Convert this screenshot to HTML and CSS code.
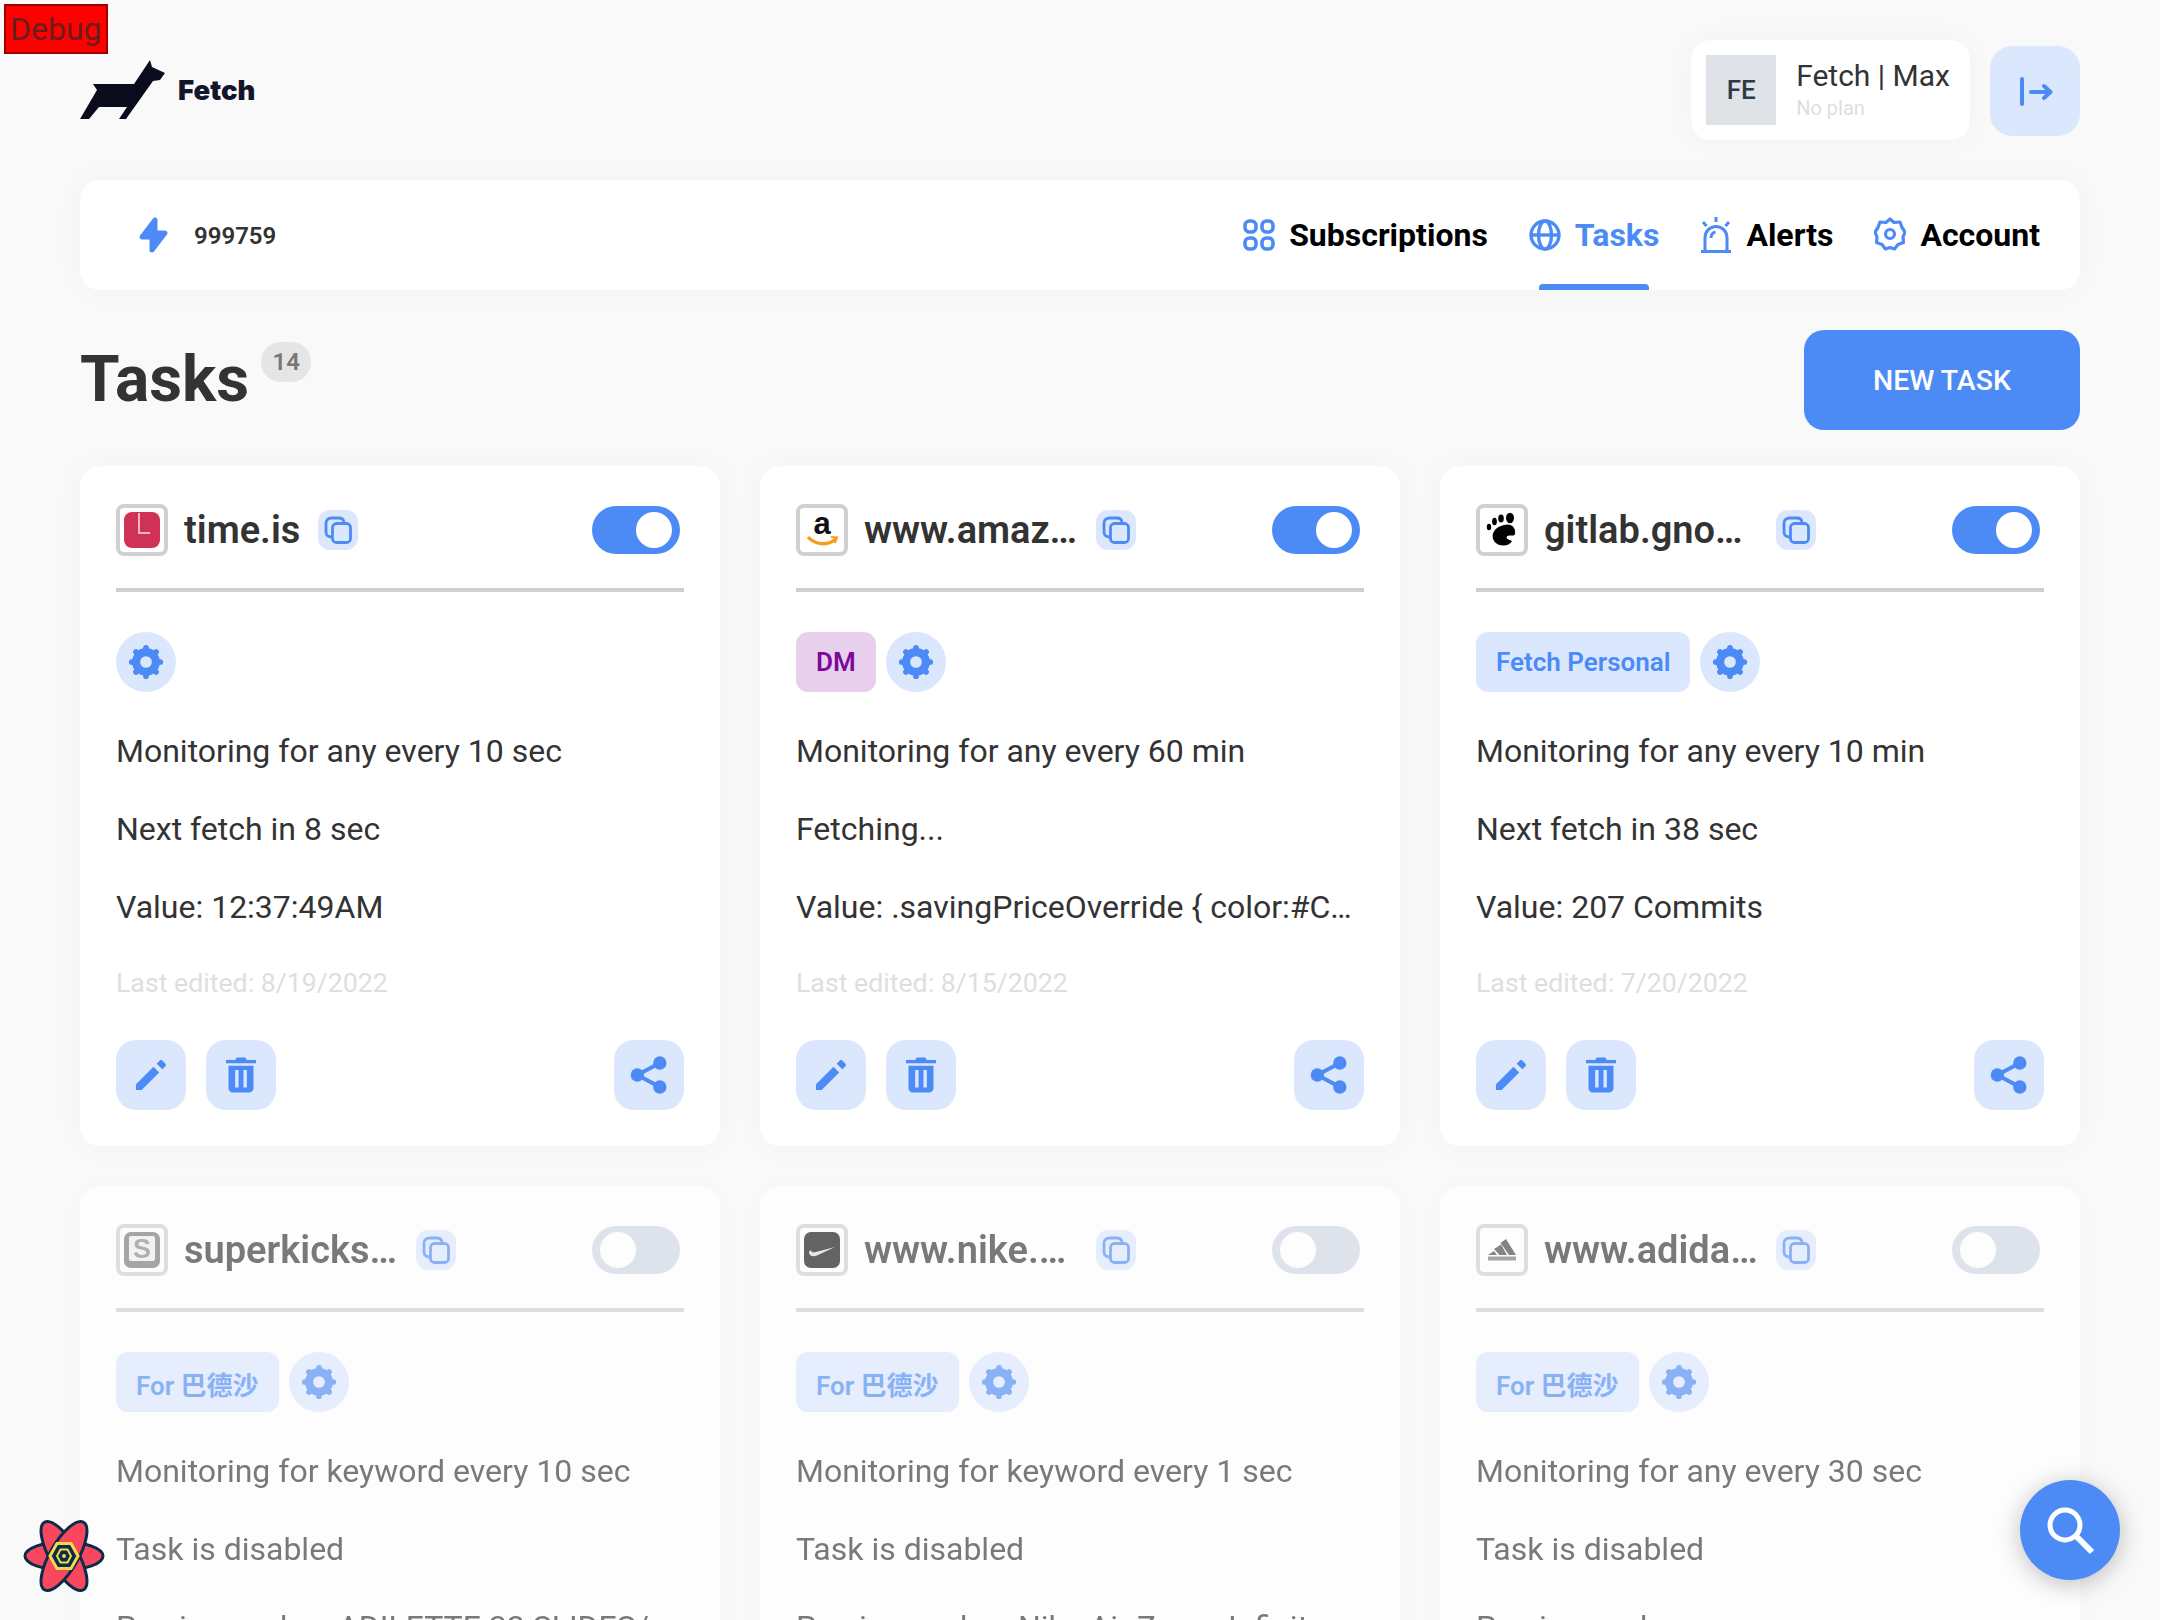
FILE: index.html
```html
<!DOCTYPE html>
<html lang="en">
<head>
    <meta charset="UTF-8">
    <title>Fetch | Tasks</title>
    <link rel="stylesheet" href="styles.css">
</head>
<body>
    <!-- shared icons -->
    <svg class="sprite" xmlns="http://www.w3.org/2000/svg">
        <symbol id="i-copy" viewBox="0 0 28 28">
            <path d="M7.500 21C4.500 21 2 19 2 16V7C2 4 4.500 2 7.500 2H15C17.500 2 19.500 3.500 20 6" fill="none" stroke="currentColor" stroke-width="2.800"/>
            <rect x="8.500" y="7.500" width="18" height="19" rx="4" fill="none" stroke="currentColor" stroke-width="2.800"/>
        </symbol>
        <symbol id="i-gear" viewBox="0 0 24 24">
            <circle cx="12" cy="12" r="6.600" fill="none" stroke="currentColor" stroke-width="5.400"/>
            <g stroke="currentColor" stroke-width="3.800" stroke-linecap="round">
                <path d="M12 2.500V5M12 19V21.500M2.500 12H5M19 12H21.500M5.300 5.300L7 7M17 17L18.700 18.700M5.300 18.700L7 17M17 7L18.700 5.300"/>
            </g>
        </symbol>
        <symbol id="i-edit" viewBox="0 0 24 24">
            <path fill="currentColor" d="M3 17.600V21h3.400L16.900 10.500l-3.400-3.400L3 17.600zM20.700 6.700c.4-.4.4-1 0-1.400l-2-2c-.4-.4-1-.4-1.400 0l-1.900 1.900 3.400 3.400 1.900-1.900z"/>
        </symbol>
        <symbol id="i-trash" viewBox="0 0 24 24">
            <path fill="currentColor" fill-rule="evenodd" d="M9.500 1.500h5L15.500 3H21v2H3V3h5.500l1-1.500zM4.500 6.500h15V20a2.500 2.500 0 0 1-2.500 2.500H7A2.500 2.500 0 0 1 4.500 20V6.500zM8.500 9v10.500h2V9h-2zm5 0v10.500h2V9h-2z"/>
        </symbol>
        <symbol id="i-share" viewBox="0 0 24 24">
            <circle cx="18.500" cy="4.800" r="4" fill="currentColor"/>
            <circle cx="5" cy="12" r="4" fill="currentColor"/>
            <circle cx="18.500" cy="19.200" r="4" fill="currentColor"/>
            <path d="M18.500 4.800L5 12L18.500 19.200" fill="none" stroke="currentColor" stroke-width="2.400"/>
        </symbol>
    </svg>

    <div class="debug">Debug</div>

    <div class="page">
        <header class="top">
            <div class="logo">
                <svg class="logo-dog" viewBox="80 60 85 60">
                    <path fill="#0b0b1e" d="M150 60L152 67L165 73L160 80L153 81L126 119H119L127 107H99L89 119H80L97 90L93 84H134Z"/>
                </svg>
                <span class="logo-text">Fetch</span>
            </div>
            <div class="top-right">
                <div class="user-card">
                    <div class="avatar">FE</div>
                    <div class="user-info">
                        <div class="user-name">Fetch | Max</div>
                        <div class="user-plan">No plan</div>
                    </div>
                </div>
                <button class="logout">
                    <svg width="36" height="36" viewBox="0 0 36 36" fill="none" stroke="currentColor" stroke-width="4" stroke-linecap="round" stroke-linejoin="round">
                        <path d="M5 6V31M14 19H33M27 13L33.500 19L27 25"/>
                    </svg>
                </button>
            </div>
        </header>

        <nav class="nav">
            <div class="credits">
                <svg width="32" height="38" viewBox="0 0 32 38">
                    <path fill="#4c8bf5" stroke="#4c8bf5" stroke-width="5" stroke-linejoin="round" d="M17 4L4 21H14V34L27 17H17Z"/>
                </svg>
                <span class="credits-num">999759</span>
            </div>
            <ul class="nav-items">
                <li class="nav-item">
                    <svg width="32" height="32" viewBox="0 0 32 32" fill="none" stroke="#4c8bf5" stroke-width="3.600">
                        <rect x="2" y="2" width="11" height="11" rx="4.500"/><rect x="19" y="2" width="11" height="11" rx="4.500"/>
                        <rect x="2" y="19" width="11" height="11" rx="4.500"/><rect x="19" y="19" width="11" height="11" rx="4.500"/>
                    </svg>
                    Subscriptions
                </li>
                <li class="nav-item active">
                    <svg width="32" height="32" viewBox="0 0 32 32" fill="none" stroke="#4c8bf5" stroke-width="3.400">
                        <circle cx="16" cy="16" r="14"/><ellipse cx="16" cy="16" rx="6.500" ry="14"/><path d="M2 16H30"/>
                    </svg>
                    Tasks
                </li>
                <li class="nav-item">
                    <svg width="32" height="36" viewBox="0 0 32 36" fill="none" stroke="#4c8bf5" stroke-width="3">
                        <path d="M1 34.500H31M5 34V21C5 14 10 9.500 16 9.500S27 14 27 21V34M11 21C11 17.500 13 15.500 15.500 15"/>
                        <path d="M16 0V5M3 5L6.500 9M29 5L25.500 9"/>
                    </svg>
                    Alerts
                </li>
                <li class="nav-item">
                    <svg width="32" height="36" viewBox="0 0 32 36" fill="none" stroke="#4c8bf5" stroke-width="3.200" stroke-linejoin="round">
                        <path d="M16 2L20 5.500L26 5L28 10.500L31 15L29 20L29.500 25.500L24 27.500L20.500 32L16 30.500L11.500 32L8 27.500L2.500 25.500L3 20L1 15L4 10.500L6 5L12 5.500Z"/>
                        <circle cx="16" cy="17" r="4.500"/>
                    </svg>
                    Account
                </li>
            </ul>
        </nav>

        <div class="title-row">
            <div class="title">
                <h1>Tasks</h1>
                <span class="count">14</span>
            </div>
            <button class="new-task">NEW TASK</button>
        </div>

        <div class="cards">
            <div class="card">
                <div class="card-head">
                    <div class="favicon">
                        <svg viewBox="0 0 36 36">
                            <rect width="36" height="36" rx="8" fill="#cf3157"/>
                            <path d="M15 1V21H26" fill="none" stroke="#f5b5c4" stroke-width="2"/>
                        </svg>
                    </div>
                    <span class="site">time.is</span>
                    <button class="copy"><svg><use href="#i-copy"/></svg></button>
                    <div class="toggle on"></div>
                </div>
                <div class="tags">
                    <button class="gear"><svg><use href="#i-gear"/></svg></button>
                </div>
                <p class="line">Monitoring for any every 10 sec</p>
                <p class="line">Next fetch in 8 sec</p>
                <p class="line">Value: 12:37:49AM</p>
                <p class="edited">Last edited: 8/19/2022</p>
                <div class="actions">
                    <button class="action"><svg><use href="#i-edit"/></svg></button>
                    <button class="action"><svg><use href="#i-trash"/></svg></button>
                    <button class="action share"><svg><use href="#i-share"/></svg></button>
                </div>
            </div>

            <div class="card">
                <div class="card-head">
                    <div class="favicon">
                        <svg viewBox="0 0 36 36">
                            <text x="18" y="22" class="fav-a">a</text>
                            <path d="M4 25C11 33 24 34 32 27" fill="none" stroke="#f79c1c" stroke-width="3.400"/>
                            <path d="M27 25L33 25.500L31 31" fill="none" stroke="#f79c1c" stroke-width="2"/>
                        </svg>
                    </div>
                    <span class="site">www.amazon.com</span>
                    <button class="copy"><svg><use href="#i-copy"/></svg></button>
                    <div class="toggle on"></div>
                </div>
                <div class="tags">
                    <span class="tag dm">DM</span>
                    <button class="gear"><svg><use href="#i-gear"/></svg></button>
                </div>
                <p class="line">Monitoring for any every 60 min</p>
                <p class="line">Fetching...</p>
                <p class="line">Value: .savingPriceOverride { color:#CC0C39!important; font-weight: 300!important; }</p>
                <p class="edited">Last edited: 8/15/2022</p>
                <div class="actions">
                    <button class="action"><svg><use href="#i-edit"/></svg></button>
                    <button class="action"><svg><use href="#i-trash"/></svg></button>
                    <button class="action share"><svg><use href="#i-share"/></svg></button>
                </div>
            </div>

            <div class="card">
                <div class="card-head">
                    <div class="favicon">
                        <svg viewBox="0 0 36 36">
                            <path fill="#000" d="M20 13C27 11 32 15 31 22C30 25 25 22 23 24.500C21 27 26 28 28 29C25 35 14 35 10 29C6 22 11 15 20 13Z"/>
                            <ellipse cx="5" cy="15" rx="2.200" ry="3.200" fill="#000"/>
                            <ellipse cx="10.500" cy="9.500" rx="2.400" ry="3.800" fill="#000"/>
                            <ellipse cx="17" cy="6.500" rx="2.800" ry="4" fill="#000"/>
                            <ellipse cx="26" cy="6" rx="4" ry="5.200" fill="#000"/>
                        </svg>
                    </div>
                    <span class="site">gitlab.gnome.org</span>
                    <button class="copy"><svg><use href="#i-copy"/></svg></button>
                    <div class="toggle on"></div>
                </div>
                <div class="tags">
                    <span class="tag">Fetch Personal</span>
                    <button class="gear"><svg><use href="#i-gear"/></svg></button>
                </div>
                <p class="line">Monitoring for any every 10 min</p>
                <p class="line">Next fetch in 38 sec</p>
                <p class="line">Value: 207 Commits</p>
                <p class="edited">Last edited: 7/20/2022</p>
                <div class="actions">
                    <button class="action"><svg><use href="#i-edit"/></svg></button>
                    <button class="action"><svg><use href="#i-trash"/></svg></button>
                    <button class="action share"><svg><use href="#i-share"/></svg></button>
                </div>
            </div>

            <div class="card disabled">
                <div class="card-head">
                    <div class="favicon">
                        <svg viewBox="0 0 36 36">
                            <rect width="36" height="36" rx="7" fill="#777"/>
                            <rect x="5" y="4" width="26" height="25" rx="2" fill="#eee"/>
                            <text x="18" y="26" class="fav-s">S</text>
                        </svg>
                    </div>
                    <span class="site">superkicks.in</span>
                    <button class="copy"><svg><use href="#i-copy"/></svg></button>
                    <div class="toggle"></div>
                </div>
                <div class="tags">
                    <span class="tag cjk">For 巴德沙</span>
                    <button class="gear"><svg><use href="#i-gear"/></svg></button>
                </div>
                <p class="line">Monitoring for keyword every 10 sec</p>
                <p class="line">Task is disabled</p>
                <p class="line">Previous value: ADILETTE 22 SLIDES/</p>
            </div>

            <div class="card disabled">
                <div class="card-head">
                    <div class="favicon">
                        <svg viewBox="0 0 36 36">
                            <rect width="36" height="36" rx="7" fill="#111"/>
                            <path fill="#ddd" d="M5 20C5 24 9 25 13 23.500L31 15L12 20C9 20.800 7 20.500 7 18C5.500 19 5 19.500 5 20Z"/>
                        </svg>
                    </div>
                    <span class="site">www.nike.com</span>
                    <button class="copy"><svg><use href="#i-copy"/></svg></button>
                    <div class="toggle"></div>
                </div>
                <div class="tags">
                    <span class="tag cjk">For 巴德沙</span>
                    <button class="gear"><svg><use href="#i-gear"/></svg></button>
                </div>
                <p class="line">Monitoring for keyword every 1 sec</p>
                <p class="line">Task is disabled</p>
                <p class="line">Previous value: Nike Air Zoom Infinity Tour</p>
            </div>

            <div class="card disabled">
                <div class="card-head">
                    <div class="favicon">
                        <svg viewBox="0 0 36 36">
                            <path fill="#444" d="M4 23L10 19L13 23ZM10 17L17 12.500L23 23H15.500ZM16.500 11L22 7L32 23H25Z"/>
                            <rect x="4" y="24.500" width="28" height="4" fill="#777"/>
                        </svg>
                    </div>
                    <span class="site">www.adidas.com</span>
                    <button class="copy"><svg><use href="#i-copy"/></svg></button>
                    <div class="toggle"></div>
                </div>
                <div class="tags">
                    <span class="tag cjk">For 巴德沙</span>
                    <button class="gear"><svg><use href="#i-gear"/></svg></button>
                </div>
                <p class="line">Monitoring for any every 30 sec</p>
                <p class="line">Task is disabled</p>
                <p class="line">Previous value:</p>
            </div>
        </div>
    </div>

    <svg class="devtools" viewBox="-42 -38 84 76">
        <g fill="#f9475e" stroke="#0b2b4a" stroke-width="3">
            <ellipse rx="39" ry="14"/>
            <ellipse rx="39" ry="14" transform="rotate(60)"/>
            <ellipse rx="39" ry="14" transform="rotate(120)"/>
        </g>
        <path d="M-7 -12.500H7L14 0L7 12.500H-7L-14 0Z" fill="#0b2b4a" stroke="#f3d94e" stroke-width="3"/>
        <path d="M-3.500 -6.500H3.500L7 0L3.500 6.500H-3.500L-7 0Z" fill="#0b2b4a" stroke="#f3d94e" stroke-width="2"/>
        <circle r="2" fill="#f3d94e"/>
    </svg>

    <button class="fab">
        <svg width="52" height="52" viewBox="0 0 52 52" fill="none" stroke="#fff" stroke-width="5">
            <circle cx="21" cy="21" r="15"/>
            <path d="M32 32L48 48" stroke-width="6"/>
        </svg>
    </button>
</body>
</html>
```

FILE: styles.css
```css
html, body {
    margin: 0;
    height: 100%;
    overflow: hidden;
}
body {
    background-color: #f9f9fa;
    color: #333;
    font-family: Roboto, "Noto Sans CJK SC", sans-serif;
}
button {
    border: none;
    padding: 0;
    display: flex;
    align-items: center;
    justify-content: center;
    cursor: pointer;
    font-family: inherit;
}
.sprite {
    display: none;
}
.page {
    height: 1620px;
    box-sizing: border-box;
    padding: 40px 80px 0;
    overflow: hidden;
}

/* overlays */
.debug {
    position: fixed;
    top: 4px;
    left: 4px;
    width: 96px;
    height: 46px;
    padding-left: 4px;
    background-color: #f00;
    border: 2px solid #a00000;
    color: #6b1d1d;
    font-size: 32px;
    line-height: 46px;
    z-index: 5;
}
.devtools {
    position: fixed;
    left: 22px;
    top: 1518px;
    width: 84px;
    height: 76px;
    z-index: 5;
}
.fab {
    position: fixed;
    left: 2020px;
    top: 1480px;
    width: 100px;
    height: 100px;
    border-radius: 50%;
    background-color: #4c8bf5;
    box-shadow: 0 4px 24px rgba(0, 0, 0, 0.25);
    z-index: 5;
}

/* header */
.top {
    display: flex;
    justify-content: space-between;
    align-items: center;
    height: 100px;
    margin-bottom: 40px;
}
.logo {
    display: flex;
    align-items: center;
    gap: 13px;
}
.logo-dog {
    width: 85px;
    height: 60px;
}
.logo-text {
    font-family: Inter, sans-serif;
    font-size: 27.5px;
    font-weight: 900;
    color: #14142a;
}
.top-right {
    display: flex;
    align-items: center;
    gap: 20px;
}
.user-card {
    display: flex;
    align-items: center;
    gap: 20px;
    height: 100px;
    padding: 0 20px 0 14px;
    box-sizing: border-box;
    background-color: #fff;
    border-radius: 20px;
    box-shadow: 0 0 30px rgba(0, 0, 0, 0.03);
}
.avatar {
    width: 70px;
    height: 70px;
    margin-left: 1px;
    display: flex;
    align-items: center;
    justify-content: center;
    background-color: #dfe3e8;
    color: #2c3a47;
    font-size: 26px;
    font-weight: 500;
}
.user-info {
    margin-top: -2px;
}
.user-name {
    font-size: 30px;
    line-height: 38px;
}
.user-plan {
    font-size: 20px;
    line-height: 26px;
    color: #dedede;
}
.logout {
    width: 90px;
    height: 90px;
    margin-top: 2px;
    border-radius: 22px;
    background-color: #dbe7fd;
    color: #4c8bf5;
}

/* nav */
.nav {
    display: flex;
    justify-content: space-between;
    align-items: center;
    height: 110px;
    padding: 0 40px 0 58px;
    background-color: #fff;
    border-radius: 20px;
    box-shadow: 0 0 30px rgba(0, 0, 0, 0.03);
}
.credits {
    display: flex;
    align-items: center;
    gap: 24px;
    font-size: 24px;
    font-weight: 600;
}
.credits-num {
    padding-top: 2px;
}
.nav-items {
    display: flex;
    gap: 41px;
    margin: 0;
    padding: 0;
    list-style: none;
}
.nav-item {
    position: relative;
    display: flex;
    align-items: center;
    gap: 14px;
    font-size: 32px;
    font-weight: 700;
    color: #000;
}
.nav-item.active {
    color: #4c8bf5;
}
.nav-item.active::after {
    content: "";
    position: absolute;
    left: 10px;
    right: 10px;
    bottom: -36px;
    height: 6px;
    background-color: #4c8bf5;
    border-radius: 4px 4px 0 0;
}

/* title row */
.title-row {
    display: flex;
    justify-content: space-between;
    align-items: center;
    margin: 40px 0 36px;
}
.title {
    display: flex;
    align-items: flex-start;
    gap: 12px;
}
.title h1 {
    margin: 0;
    font-size: 64px;
    font-weight: 700;
    line-height: 100px;
}
.count {
    margin-top: 12px;
    width: 50px;
    height: 40px;
    border-radius: 20px;
    background-color: #e5e5e5;
    color: #777;
    font-size: 24px;
    font-weight: 600;
    line-height: 40px;
    text-align: center;
}
.new-task {
    width: 276px;
    height: 100px;
    border-radius: 20px;
    background-color: #4c8bf5;
    color: #fff;
    font-size: 28.5px;
    font-weight: 500;
}

/* task cards */
.cards {
    display: grid;
    grid-template-columns: repeat(3, 640px);
    gap: 40px;
}
.card {
    box-sizing: border-box;
    height: 680px;
    padding: 38px 36px 36px;
    background-color: #fff;
    border-radius: 20px;
    box-shadow: 0 0 30px rgba(0, 0, 0, 0.03);
}
.card.disabled {
    opacity: 0.65;
}
.card-head {
    display: flex;
    align-items: center;
    height: 52px;
    padding-bottom: 32px;
    border-bottom: 4px solid #d0d0d0;
}
.favicon {
    flex: none;
    box-sizing: border-box;
    width: 52px;
    height: 52px;
    padding: 4px;
    border: 4px solid #d0d0d0;
    border-radius: 8px;
}
.favicon svg {
    display: block;
    width: 36px;
    height: 36px;
}
.fav-a {
    font-family: "Liberation Sans", sans-serif;
    font-size: 31px;
    font-weight: 700;
    text-anchor: middle;
    fill: #111;
}
.fav-s {
    font-family: "Liberation Sans", sans-serif;
    font-size: 27px;
    font-weight: 700;
    text-anchor: middle;
    fill: #888;
}
.site {
    max-width: 214px;
    margin: 0 18px 0 16px;
    font-size: 38px;
    font-weight: 600;
    white-space: nowrap;
    overflow: hidden;
    text-overflow: ellipsis;
}
.copy {
    flex: none;
    width: 40px;
    height: 40px;
    border-radius: 12px;
    background-color: #dbe7fd;
    color: #4c8bf5;
}
.copy svg {
    width: 28px;
    height: 28px;
}
.toggle {
    position: relative;
    flex: none;
    width: 88px;
    height: 48px;
    margin-left: auto;
    margin-right: 4px;
    border-radius: 24px;
    background-color: #cfd6e4;
}
.toggle::after {
    content: "";
    position: absolute;
    top: 6px;
    left: 8px;
    width: 36px;
    height: 36px;
    border-radius: 50%;
    background-color: #fff;
}
.toggle.on {
    background-color: #4c8bf5;
}
.toggle.on::after {
    left: 44px;
}
.tags {
    display: flex;
    gap: 10px;
    margin: 40px 0 20px;
}
.tag {
    height: 60px;
    padding: 0 20px;
    border-radius: 12px;
    background-color: #dbe7fd;
    color: #4c8bf5;
    font-size: 26px;
    font-weight: 600;
    line-height: 60px;
}
.tag.dm {
    background-color: #e8d0ec;
    color: #7b0a9c;
}
.tag.cjk {
    box-sizing: border-box;
    padding-top: 8px;
    line-height: 52px;
}
.gear {
    width: 60px;
    height: 60px;
    border-radius: 50%;
    background-color: #dbe7fd;
    color: #4c8bf5;
}
.gear svg {
    width: 36px;
    height: 36px;
}
.line {
    margin: 0;
    font-size: 32px;
    line-height: 78px;
    white-space: nowrap;
    overflow: hidden;
    text-overflow: ellipsis;
}
.edited {
    margin: 0 0 20px;
    font-size: 26.7px;
    line-height: 74px;
    color: #dedede;
}
.actions {
    display: flex;
    gap: 20px;
}
.action {
    width: 70px;
    height: 70px;
    border-radius: 20px;
    background-color: #dbe7fd;
    color: #4c8bf5;
}
.action svg {
    width: 40px;
    height: 40px;
}
.action.share {
    margin-left: auto;
}
```
